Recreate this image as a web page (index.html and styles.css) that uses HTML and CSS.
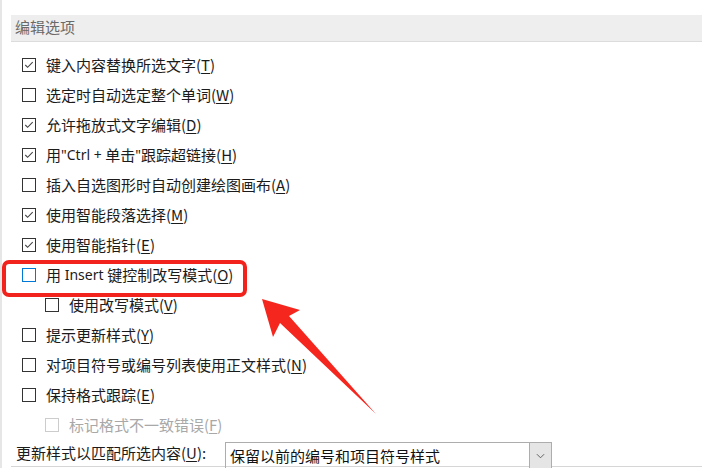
FILE: index.html
```html
<!DOCTYPE html>
<html lang="zh-CN">
<head>
    <meta charset="UTF-8">
    <title>编辑选项</title>
    <link rel="stylesheet" href="styles.css">
</head>
<body>
    <div class="page">
        <!-- Section header -->
        <div class="section-title">编辑选项</div>

        <!-- Options list -->
        <div class="options">
            <label class="option"><span class="box checked"><svg viewBox="0 0 13 13"><polyline points="2.5,6.5 5,9 10.5,3.5"/></svg></span>键入内容替换所选文字(<u>T</u>)</label>
            <label class="option"><span class="box"></span>选定时自动选定整个单词(<u>W</u>)</label>
            <label class="option"><span class="box checked"><svg viewBox="0 0 13 13"><polyline points="2.5,6.5 5,9 10.5,3.5"/></svg></span>允许拖放式文字编辑(<u>D</u>)</label>
            <label class="option"><span class="box checked"><svg viewBox="0 0 13 13"><polyline points="2.5,6.5 5,9 10.5,3.5"/></svg></span>用<span class="latin">"Ctrl + </span>单击<span class="latin">"</span>跟踪超链接(<u>H</u>)</label>
            <label class="option"><span class="box"></span>插入自选图形时自动创建绘图画布(<u>A</u>)</label>
            <label class="option"><span class="box checked"><svg viewBox="0 0 13 13"><polyline points="2.5,6.5 5,9 10.5,3.5"/></svg></span>使用智能段落选择(<u>M</u>)</label>
            <label class="option"><span class="box checked"><svg viewBox="0 0 13 13"><polyline points="2.5,6.5 5,9 10.5,3.5"/></svg></span>使用智能指针(<u>E</u>)</label>
            <label class="option"><span class="box focus"></span>用<span class="latin">&nbsp;Insert&nbsp;</span>键控制改写模式(<u>O</u>)</label>
            <label class="option sub"><span class="box"></span>使用改写模式(<u>V</u>)</label>
            <label class="option"><span class="box"></span>提示更新样式(<u>Y</u>)</label>
            <label class="option"><span class="box"></span>对项目符号或编号列表使用正文样式(<u>N</u>)</label>
            <label class="option"><span class="box"></span>保持格式跟踪(<u>E</u>)</label>
            <label class="option sub disabled"><span class="box"></span>标记格式不一致错误(<u>F</u>)</label>
        </div>

        <!-- Style update dropdown -->
        <div class="select-row">
            <span class="select-label">更新样式以匹配所选内容(<u>U</u>):</span>
            <div class="select">
                <span class="select-value">保留以前的编号和项目符号样式</span>
                <span class="select-btn"><svg viewBox="0 0 10 6"><polyline points="1,1 5,5 9,1"/></svg></span>
            </div>
        </div>

        <!-- Annotation: highlight box and arrow -->
        <svg class="annotation" width="702" height="468" viewBox="0 0 702 468">
            <rect x="4" y="262" width="241" height="33" rx="5" ry="5" fill="none" stroke="#f2231c" stroke-width="4"/>
            <polygon points="262,299 300,310 289,316 376,414 280,323 273,337" fill="#f5261d"/>
        </svg>
    </div>
</body>
</html>
```

FILE: styles.css
```css
/* Base page */
body {
    margin: 0;
    font-family: "Noto Sans CJK SC", "Noto Sans", sans-serif;
    font-size: 15px;
    color: #1b1b1b;
    background-color: white;
}

.page {
    position: relative;
    width: 702px;
    height: 468px;
    overflow: hidden;
    padding-left: 9px;
    box-sizing: border-box;
    border-left: 2px solid #e6e6e6;
}

/* Latin runs use a narrower face, like the dialog font */
.latin {
    font-family: "Noto Sans", sans-serif;
    font-size: 14px;
}

/* Section header band */
.section-title {
    margin-top: 15px;
    height: 27px;
    line-height: 24px;
    padding-left: 4px;
    box-sizing: border-box;
    background-color: #eeeeee;
    border-bottom: 1px solid #dcdcdc;
    color: #6a6a6a;
}

/* Checkbox rows */
.options {
    margin-top: 7px;
    padding-left: 11px;
}

.option {
    display: flex;
    align-items: center;
    height: 30px;
    white-space: pre;
}

.option.sub {
    padding-left: 23px;
}

.option.disabled {
    color: #a8a8a8;
}

.box {
    width: 14px;
    height: 14px;
    border: 1px solid #333;
    box-sizing: border-box;
    margin-right: 10px;
    margin-top: 1px;
    flex: none;
    background-color: white;
}

.box svg {
    display: block;
    width: 12px;
    height: 12px;
    fill: none;
    stroke: #444;
    stroke-width: 1.2;
}

.box.focus {
    border-color: #0078d7;
}

.option.disabled .box {
    border-color: #cccccc;
}

u {
    text-decoration-thickness: 1px;
    text-underline-offset: 2px;
}

/* Dropdown row */
.select-row {
    display: flex;
    align-items: center;
    height: 27px;
    padding-left: 5px;
    border-bottom: 1px solid #d6d6d6;
}

.select-label {
    width: 209px;
}

.select {
    display: flex;
    align-items: center;
    width: 327px;
    height: 26px;
    border: 1px solid #adadad;
    border-bottom: none;
    box-sizing: border-box;
    margin-top: 3px;
    align-self: flex-start;
}

.select-value {
    flex: 1;
    padding-left: 4px;
    color: #111;
}

.select-btn {
    width: 21px;
    height: 100%;
    background-color: #e5e5e5;
    border-left: 1px solid #adadad;
    display: flex;
    align-items: center;
    justify-content: center;
}

.select-btn svg {
    width: 9px;
    height: 6px;
    fill: none;
    stroke: #555;
    stroke-width: 1;
}

/* Annotation overlay */
.annotation {
    position: absolute;
    left: -2px;
    top: 0;
    pointer-events: none;
}
```
